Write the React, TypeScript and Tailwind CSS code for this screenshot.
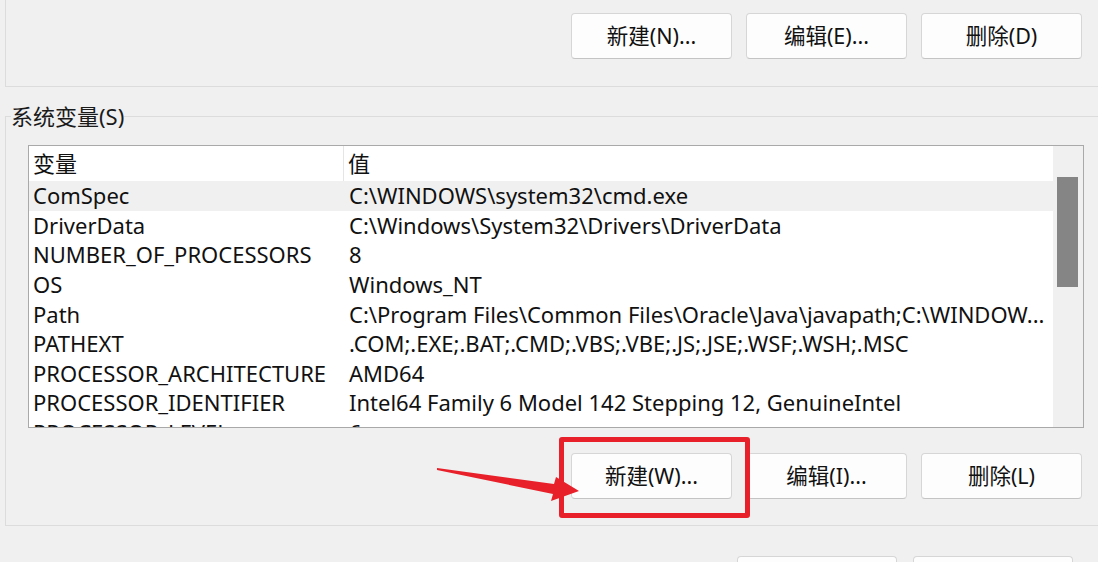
import React from "react";

const rows: [string, string][] = [
  ["ComSpec", "C:\\WINDOWS\\system32\\cmd.exe"],
  ["DriverData", "C:\\Windows\\System32\\Drivers\\DriverData"],
  ["NUMBER_OF_PROCESSORS", "8"],
  ["OS", "Windows_NT"],
  ["Path", "C:\\Program Files\\Common Files\\Oracle\\Java\\javapath;C:\\WINDOW..."],
  ["PATHEXT", ".COM;.EXE;.BAT;.CMD;.VBS;.VBE;.JS;.JSE;.WSF;.WSH;.MSC"],
  ["PROCESSOR_ARCHITECTURE", "AMD64"],
  ["PROCESSOR_IDENTIFIER", "Intel64 Family 6 Model 142 Stepping 12, GenuineIntel"],
  ["PROCESSOR_LEVEL", "6"],
];

function Btn({ label, w = "w-[161px]" }: { label: string; w?: string }) {
  return (
    <button
      className={`${w} h-[46px] shrink-0 rounded-[4px] border border-[#d6d6d6] border-b-[#c4c4c4] bg-[#fdfdfd] text-[21.5px] text-[#111] flex items-center justify-center`}
    >
      {label}
    </button>
  );
}

export default function App() {
  return (
    <div
      className="relative w-[1098px] h-[562px] overflow-hidden bg-[#f0f0f0] text-[#111]"
      style={{ fontFamily: '"Noto Sans", "Noto Sans CJK SC", sans-serif' }}
    >
      {/* top group */}
      <div className="ml-[5px] h-[87px] border-l border-b border-[#dcdcdc] flex justify-end items-start pt-[13px] pr-[16px] gap-[14px]">
        <Btn label="新建(N)..." />
        <Btn label="编辑(E)..." />
        <Btn label="删除(D)" />
      </div>

      {/* system variables group */}
      <fieldset className="ml-[5px] mt-[17px] border border-r-0 border-[#dcdcdc] px-[5px] pb-[26px]">
        <legend className="text-[22px] leading-[24px] px-0 text-[#1b1b1b]">系统变量(S)</legend>
        <div className="ml-[17px] mt-[17px] w-[1056px] h-[283px] border border-[#a9a9a9] bg-white flex overflow-hidden">
          <div className="flex-1 flex flex-col overflow-hidden">
            <div className="flex h-[35px] shrink-0 items-center text-[22px]">
              <div className="w-[315px] pl-[4px] border-r border-[#e5e5e5] h-full flex items-center">变量</div>
              <div className="pl-[4px]">值</div>
            </div>
            {rows.map(([k, v], i) => (
              <div
                key={k}
                className={`flex h-[29.6px] shrink-0 items-center text-[22px] whitespace-nowrap ${i === 0 ? "bg-[#f0f0f0]" : ""}`}
              >
                <div className="w-[316px] pl-[4px]">{k}</div>
                <div className="pl-[4px]">{v}</div>
              </div>
            ))}
          </div>
          <div className="w-[30px] shrink-0 bg-[#f0f0f0] pt-[31px] pl-[4px]">
            <div className="w-[21px] h-[110px] bg-[#858585]" />
          </div>
        </div>
        <div className="flex justify-end gap-[14px] mt-[25px] pr-[11px]">
          <Btn label="新建(W)..." />
          <Btn label="编辑(I)..." />
          <Btn label="删除(L)" />
        </div>
      </fieldset>

      {/* bottom dialog buttons (cut off at the window edge) */}
      <div className="flex justify-end gap-[16px] pr-[25px] mt-[30px]">
        <Btn label="" w="w-[160px]" />
        <Btn label="" w="w-[160px]" />
      </div>

      {/* annotation overlays */}
      <div className="absolute left-[559px] top-[437px] w-[191px] h-[81px] border-[5px] border-[#e8202a] rounded-[3px]" />
      <svg className="absolute left-0 top-0" width="1098" height="562" viewBox="0 0 1098 562">
        <polygon
          points="437,468 554,484 556,477 579,491 551,501 553,494 437,470"
          fill="#e8202a"
        />
      </svg>
    </div>
  );
}
